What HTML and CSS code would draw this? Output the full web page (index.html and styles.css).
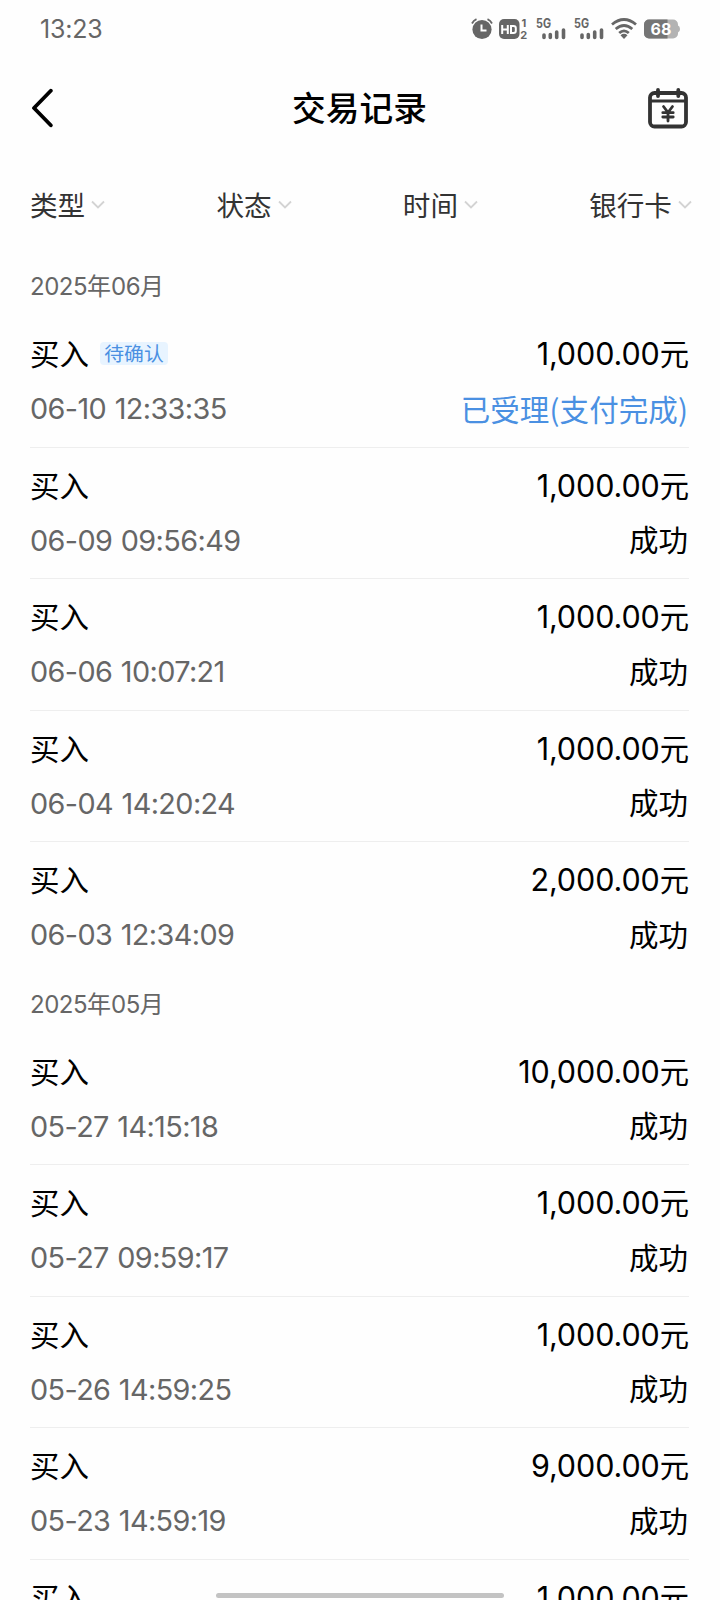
FILE: index.html
```html
<!DOCTYPE html>
<html lang="zh-CN">
<head>
    <meta charset="UTF-8">
    <meta name="viewport" content="width=device-width, initial-scale=1.0">
    <title>交易记录</title>
    <link rel="stylesheet" href="styles.css">
</head>
<body>

    <div class="status-bar">
        <span class="clock">13:23</span>
        <div class="status-icons">
            <!-- alarm -->
            <svg width="22" height="22" viewBox="0 0 22 22">
                <circle cx="11" cy="11.5" r="9.6" fill="#666"/>
                <path d="M1 5.5Q2.5 2.5 5.5 1.2M21 5.5Q19.5 2.5 16.5 1.2" fill="none" stroke="#666" stroke-width="1.8"/>
                <path d="M10.5 6.5v6h5" fill="none" stroke="#fff" stroke-width="2"/>
            </svg>
            <!-- HD voice -->
            <svg class="hd" width="30" height="28" viewBox="0 -3 30 28">
                <rect x="0" y="1" width="20.500" height="20" rx="5" fill="#666"/>
                <path d="M3.200 7v9M8.800 7v9M3.200 11.500h5.600M12 8v7h2.500q2.300 0 2.300-2v-3q0-2-2.300-2z" fill="none" stroke="#fff" stroke-width="2"/>
                <text x="22.500" y="8.800" class="tiny">1</text>
                <text x="21.300" y="21" class="tiny">2</text>
            </svg>
            <svg class="signal" width="30" height="28" viewBox="0 -3 30 28">
                <text x="0" y="10" class="net" textLength="15" lengthAdjust="spacingAndGlyphs">5G</text>
                <path d="M8 17v2.500M14.300 16.500v3M20.700 14v5.500M27.500 12v7.500" stroke="#666" stroke-width="3.600" stroke-linecap="round"/>
            </svg>
            <svg class="signal" width="30" height="28" viewBox="0 -3 30 28">
                <text x="0" y="10" class="net" textLength="15" lengthAdjust="spacingAndGlyphs">5G</text>
                <path d="M8 17v2.500M14.300 16.500v3M20.700 14v5.500M27.500 12v7.500" stroke="#666" stroke-width="3.600" stroke-linecap="round"/>
            </svg>
            <svg class="wifi" width="26" height="22" viewBox="0 0 26 22">
                <path d="M1 6.500Q13-3.500 25 6.500M4.700 11Q13 4 21.300 11M8.200 15Q13 10.800 17.800 15" fill="none" stroke="#666" stroke-width="2.800"/>
                <path d="M9.500 17.200Q13 14.500 16.500 17.200L13 21z" fill="#666"/>
            </svg>
            <svg class="battery" width="36" height="20" viewBox="0 0 36 20">
                <rect x="0" y="0.500" width="34" height="19" rx="5" fill="#b3b3b3"/>
                <path d="M5 .5h18.500v19H5a5 5 0 0 1-5-5v-9a5 5 0 0 1 5-5z" fill="#757575"/>
                <path d="M34 6.500q2 .5 2 3.500t-2 3.500z" fill="#b3b3b3"/>
                <text x="17" y="15.700" class="level">68</text>
            </svg>
        </div>
    </div>

    <div class="header">
        <svg class="back" width="22" height="40" viewBox="0 0 22 40">
            <path d="M19.800 2.700L3 20l16.800 17.300" fill="none" stroke="#000" stroke-width="3.800" stroke-linecap="round" stroke-linejoin="round"/>
        </svg>
        <h1>交易记录</h1>
        <svg class="calendar" width="40" height="41" viewBox="0 0 40 41">
            <rect x="2" y="5" width="36" height="33.500" rx="4.500" fill="none" stroke="#333" stroke-width="3.800"/>
            <path d="M2 13h36" stroke="#333" stroke-width="3.200"/>
            <path d="M10 2v6M30.300 2v6" stroke="#333" stroke-width="3.800" stroke-linecap="round"/>
            <path d="M15.500 18.500l4.500 6 4.500-6M20 24.500v8.500M14.800 24.700h10.400M14.800 29h10.400" fill="none" stroke="#333" stroke-width="2.800" stroke-linecap="round"/>
        </svg>
    </div>

    <div class="filters">
        <div class="filter">类型<svg width="14" height="9" viewBox="0 0 14 9"><path d="M1 1.500l6 6 6-6"/></svg></div>
        <div class="filter">状态<svg width="14" height="9" viewBox="0 0 14 9"><path d="M1 1.500l6 6 6-6"/></svg></div>
        <div class="filter">时间<svg width="14" height="9" viewBox="0 0 14 9"><path d="M1 1.500l6 6 6-6"/></svg></div>
        <div class="filter">银行卡<svg width="14" height="9" viewBox="0 0 14 9"><path d="M1 1.500l6 6 6-6"/></svg></div>
    </div>

    <div class="records">
        <h2 class="month"><span>2025</span>年<span>06</span>月</h2>

        <div class="record">
            <div class="line"><span class="type">买入<span class="badge">待确认</span></span><span class="amount">1,000.00<span class="unit">元</span></span></div>
            <div class="line"><span class="time">06-10 12:33:35</span><span class="state pending">已受理(支付完成)</span></div>
        </div>
        <div class="record">
            <div class="line"><span class="type">买入</span><span class="amount">1,000.00<span class="unit">元</span></span></div>
            <div class="line"><span class="time">06-09 09:56:49</span><span class="state">成功</span></div>
        </div>
        <div class="record">
            <div class="line"><span class="type">买入</span><span class="amount">1,000.00<span class="unit">元</span></span></div>
            <div class="line"><span class="time">06-06 10:07:21</span><span class="state">成功</span></div>
        </div>
        <div class="record">
            <div class="line"><span class="type">买入</span><span class="amount">1,000.00<span class="unit">元</span></span></div>
            <div class="line"><span class="time">06-04 14:20:24</span><span class="state">成功</span></div>
        </div>
        <div class="record last">
            <div class="line"><span class="type">买入</span><span class="amount">2,000.00<span class="unit">元</span></span></div>
            <div class="line"><span class="time">06-03 12:34:09</span><span class="state">成功</span></div>
        </div>

        <h2 class="month"><span>2025</span>年<span>05</span>月</h2>

        <div class="record">
            <div class="line"><span class="type">买入</span><span class="amount">10,000.00<span class="unit">元</span></span></div>
            <div class="line"><span class="time">05-27 14:15:18</span><span class="state">成功</span></div>
        </div>
        <div class="record">
            <div class="line"><span class="type">买入</span><span class="amount">1,000.00<span class="unit">元</span></span></div>
            <div class="line"><span class="time">05-27 09:59:17</span><span class="state">成功</span></div>
        </div>
        <div class="record">
            <div class="line"><span class="type">买入</span><span class="amount">1,000.00<span class="unit">元</span></span></div>
            <div class="line"><span class="time">05-26 14:59:25</span><span class="state">成功</span></div>
        </div>
        <div class="record">
            <div class="line"><span class="type">买入</span><span class="amount">9,000.00<span class="unit">元</span></span></div>
            <div class="line"><span class="time">05-23 14:59:19</span><span class="state">成功</span></div>
        </div>
        <div class="record">
            <div class="line"><span class="type">买入</span><span class="amount">1,000.00<span class="unit">元</span></span></div>
        </div>
    </div>

    <div class="home-bar"></div>

</body>
</html>
```

FILE: styles.css
```css
* {
    box-sizing: border-box;
}

body {
    margin: 0;
    height: 1600px;
    overflow: hidden;
    display: flex;
    flex-direction: column;
    background-color: #fefefe;
    color: #000;
    font-family: 'Noto Sans CJK SC', sans-serif;
}

svg {
    display: block;
    flex: none;
}

/* status bar */
.status-bar {
    flex: none;
    height: 57px;
    padding: 0 40px;
    display: flex;
    align-items: center;
    justify-content: space-between;
}

.clock {
    font-family: 'Inter', sans-serif;
    font-size: 25px;
    letter-spacing: -0.2px;
    color: #666;
}

.status-icons {
    display: flex;
    align-items: center;
}

.hd {
    margin-left: 6px;
}

.signal {
    margin-left: 7px;
}

.signal + .signal {
    margin-left: 8px;
}

.wifi {
    margin-left: 7px;
}

.battery {
    margin-left: 7px;
}

.tiny,
.net,
.level {
    font-family: 'Inter', sans-serif;
    font-weight: 700;
    fill: #666;
}

.tiny {
    font-size: 11px;
}

.net {
    font-size: 12.5px;
}

.level {
    font-size: 16px;
    fill: #fff;
    text-anchor: middle;
}

/* title */
.header {
    flex: none;
    height: 102px;
    padding: 0 32px 0 31px;
    display: flex;
    align-items: center;
    justify-content: space-between;
}

.header h1 {
    margin: 0;
    padding: 0 0 2px 18px;
    font-size: 33.7px;
    font-weight: 500;
    line-height: 50px;
}

/* filters */
.filters {
    flex: none;
    height: 97px;
    padding: 0 28px 8px 30px;
    display: flex;
    align-items: center;
    justify-content: space-between;
}

.filter {
    display: flex;
    align-items: center;
    gap: 6px;
    font-size: 27.6px;
    line-height: 40px;
    color: #333;
}

.filter svg {
    margin-top: 2px;
}

.filter path {
    fill: none;
    stroke: #d3d3d3;
    stroke-width: 1.8;
}

/* records */
.records {
    flex: 1;
    min-height: 0;
    overflow: hidden;
    padding: 0 31px 0 30px;
}

.month {
    margin: 0;
    height: 60px;
    line-height: 57px;
    font-size: 24px;
    font-weight: 400;
    color: #666;
}

.month span {
    font-family: 'Inter', sans-serif;
    letter-spacing: -0.5px;
}

.record {
    height: 131.5px;
    padding-top: 18px;
    display: flex;
    flex-direction: column;
    gap: 15px;
    border-bottom: 1px solid #eee;
}

.record.last {
    border-bottom: none;
}

.record:last-child {
    height: auto;
    border-bottom: none;
}

.line {
    height: 40px;
    line-height: 40px;
    display: flex;
    align-items: center;
    justify-content: space-between;
    font-size: 29.5px;
}

.type {
    display: flex;
    align-items: center;
    padding-bottom: 4px;
}

.badge {
    margin: 3px 0 0 11px;
    width: 68px;
    height: 23px;
    line-height: 21px;
    border-radius: 4px;
    background-color: #e8f4ff;
    color: #4a90e2;
    font-size: 19.8px;
    text-align: center;
}

.amount {
    padding-bottom: 2px;
    font-family: 'Inter', sans-serif;
    font-size: 30.5px;
    letter-spacing: -0.1px;
}

.unit {
    font-family: 'Noto Sans CJK SC', sans-serif;
    font-size: 29.3px;
    letter-spacing: 0;
}

.time {
    font-family: 'Inter', sans-serif;
    font-size: 28.8px;
    letter-spacing: -0.6px;
    word-spacing: 1px;
    color: #666;
}

.state {
    padding: 0 1px 5px 0;
}

.pending {
    padding-bottom: 3px;
    letter-spacing: 0.1px;
    color: #4a90e2;
}

/* gesture bar */
.home-bar {
    position: absolute;
    left: 216px;
    bottom: 2px;
    width: 288px;
    height: 5px;
    border-radius: 3px;
    background-color: #c3c3c3;
}
```
